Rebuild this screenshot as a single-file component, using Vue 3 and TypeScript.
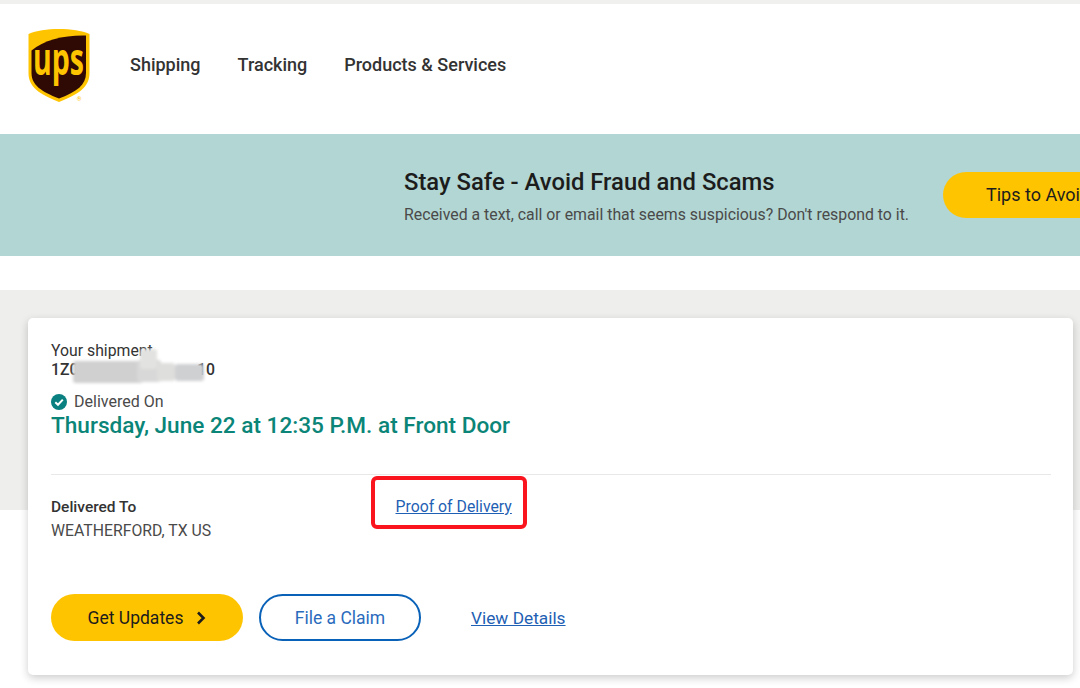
<script setup lang="ts">
const navItems: string[] = ['Shipping', 'Tracking', 'Products & Services']
const smudges = [
  { left: 0, top: 5, width: 70, height: 22, background: '#d0d0d0' },
  { left: 64, top: 4, width: 24, height: 22, background: '#d8d8d8' },
  { left: 67, top: -7, width: 17, height: 20, background: '#e2e2e0' },
  { left: 84, top: 7, width: 18, height: 18, background: '#dededc' },
  { left: 102, top: 8, width: 29, height: 17, background: '#cfd0d2' },
]
</script>

<template>
  <div class="page">
    <header class="header">
      <svg class="logo" width="62" height="76" viewBox="0 0 62 76" aria-label="UPS">
        <path d="M31 0C19 0 8 1.500 0.500 5V44C0.500 58 11 65 31 73C51 65 61.500 58 61.500 44V5C54 1.500 43 0 31 0Z" fill="#ffc400" />
        <path d="M58 6.500V44C58 56 49 62.500 31 69.500C13 62.500 3.500 56 3.500 44V21.500C16 11 36 6 58 6.500Z" fill="#2f0a05" />
        <text class="logo-text" x="30.500" y="46" text-anchor="middle" textLength="51" lengthAdjust="spacingAndGlyphs">ups</text>
        <text class="logo-mark" x="51" y="72" text-anchor="middle">®</text>
      </svg>
      <nav class="nav">
        <a v-for="item in navItems" :key="item" class="nav-item">{{ item }}</a>
      </nav>
    </header>

    <section class="banner">
      <div class="banner-copy">
        <h2 class="banner-title">Stay Safe - Avoid Fraud and Scams</h2>
        <p class="banner-text">Received a text, call or email that seems suspicious? Don't respond to it.</p>
      </div>
      <div class="banner-button">Tips to Avoid</div>
    </section>

    <main class="tracking">
      <article class="card">
        <div class="shipment">
          <div class="shipment-label">Your shipment</div>
          <div class="shipment-number">
            <span>1Z0</span>
            <span>10</span>
          </div>
          <div class="redaction">
            <span
              v-for="(patch, index) in smudges"
              :key="index"
              class="smudge"
              :style="{
                left: patch.left + 'px',
                top: patch.top + 'px',
                width: patch.width + 'px',
                height: patch.height + 'px',
                background: patch.background,
              }"
            ></span>
          </div>
        </div>

        <div class="status">
          <svg width="16" height="16" viewBox="0 0 16 16" aria-hidden="true">
            <circle cx="8" cy="8" r="8" fill="#0a8080" />
            <path d="M4.300 8.200L7 10.800L11.800 5.600" fill="none" stroke="#fff" stroke-width="2" />
          </svg>
          <span>Delivered On</span>
        </div>
        <div class="date">Thursday, June 22 at 12:35 P.M. at Front Door</div>

        <div class="details">
          <div class="destination">
            <div class="destination-label">Delivered To</div>
            <div class="destination-value">WEATHERFORD, TX US</div>
          </div>
          <div class="proof">
            <a class="link">Proof of Delivery</a>
          </div>
        </div>

        <div class="actions">
          <button class="btn btn-primary" type="button">
            Get Updates
            <svg width="10" height="14" viewBox="0 0 10 14" aria-hidden="true">
              <path d="M2 1.500L7.500 7L2 12.500" fill="none" stroke="#1c1c1c" stroke-width="2.600" />
            </svg>
          </button>
          <button class="btn btn-outline" type="button">File a Claim</button>
          <a class="link link-large">View Details</a>
        </div>
      </article>
    </main>
  </div>
</template>

<style>
html,
body {
  margin: 0;
  background: #fff;
  overflow: hidden;
}
</style>

<style scoped>
.page {
  width: 1080px;
  height: 688px;
  overflow: hidden;
  background: #fff;
  font-family: Roboto, "Liberation Sans", sans-serif;
  color: #333;
  border-top: 4px solid #f0f0ee;
  box-sizing: border-box;
}

.header {
  height: 130px;
  padding: 25px 0 0 28px;
  box-sizing: border-box;
  display: flex;
  align-items: flex-start;
}

.logo {
  display: block;
  flex: none;
}

.logo-text {
  font-family: "Open Sans", Roboto, sans-serif;
  font-weight: 700;
  font-size: 45px;
  fill: #ffc400;
}

.logo-mark {
  font-family: Roboto, sans-serif;
  font-size: 6px;
  fill: #ffc400;
}

.nav {
  display: flex;
  gap: 37px;
  margin: 25px 0 0 40px;
}

.nav-item {
  font-size: 18px;
  font-weight: 500;
  line-height: 22px;
  color: #333;
}

.banner {
  height: 122px;
  background: #b2d6d3;
  display: flex;
  padding-left: 404px;
  box-sizing: border-box;
  white-space: nowrap;
  overflow: hidden;
}

.banner-copy {
  width: 539px;
  flex: none;
  padding-top: 33px;
}

.banner-title {
  margin: 0;
  font-size: 23.800px;
  line-height: 30px;
  font-weight: 500;
  color: #1c1c1c;
}

.banner-text {
  margin: 8px 0 0;
  font-size: 15.850px;
  line-height: 20px;
  color: #4a4a4a;
}

.banner-button {
  flex: none;
  width: 240px;
  height: 46px;
  margin-top: 38px;
  padding-left: 43px;
  box-sizing: border-box;
  background: #ffc400;
  border-radius: 23px;
  font-size: 18px;
  line-height: 46px;
  color: #1c1c1c;
}

.tracking {
  margin-top: 34px;
  height: 220px;
  box-sizing: border-box;
  background: #eeeeec;
  padding: 28px 7px 0 28px;
}

.card {
  height: 357px;
  box-sizing: border-box;
  background: #fff;
  border-radius: 5px;
  box-shadow: 0 3px 8px rgba(0, 0, 0, 0.2);
  padding: 24px 22px 0 23px;
}

.shipment {
  position: relative;
  font-size: 15.800px;
  line-height: 18px;
  color: #333;
}

.shipment-number {
  margin-top: 1px;
  width: 164px;
  display: flex;
  justify-content: space-between;
  font-weight: 500;
}

.redaction {
  position: absolute;
  left: 22px;
  top: 14px;
  width: 131px;
  height: 28px;
  filter: blur(1.500px);
}

.smudge {
  position: absolute;
  border-radius: 3px;
}

.status {
  margin-top: 14px;
  display: flex;
  align-items: center;
  gap: 7px;
  font-size: 16px;
  line-height: 18px;
  color: #4a4a4a;
}

.date {
  font-size: 22.600px;
  line-height: 30px;
  font-weight: 500;
  color: #0a8577;
}

.details {
  margin-top: 33px;
  border-top: 1px solid #e8e8e6;
  padding-top: 22px;
  display: flex;
  height: 63px;
}

.destination {
  width: 344.500px;
  flex: none;
  font-size: 15.800px;
  line-height: 20px;
}

.destination-label {
  font-size: 15.500px;
  font-weight: 500;
  color: #333;
}

.destination-value {
  margin-top: 4px;
  color: #4a4a4a;
}

.proof {
  position: relative;
  font-size: 15.800px;
  line-height: 20px;
}

.proof::after {
  content: "";
  position: absolute;
  left: -25px;
  top: -21px;
  width: 156px;
  height: 53px;
  border: 4px solid #fa141e;
  border-radius: 6px;
  box-sizing: border-box;
}

.link {
  color: #1f5fb4;
  text-decoration: underline;
  white-space: nowrap;
}

.actions {
  margin-top: 34px;
  display: flex;
  align-items: center;
}

.btn {
  height: 47px;
  border-radius: 24px;
  box-sizing: border-box;
  font-family: inherit;
  font-size: 17.500px;
  padding: 0;
}

.btn-primary {
  width: 192px;
  border: none;
  background: #ffc400;
  color: #1c1c1c;
  display: flex;
  align-items: center;
  justify-content: center;
  gap: 13px;
}

.btn-outline {
  width: 162px;
  margin-left: 16px;
  background: #fff;
  border: 2px solid #0a62b8;
  color: #2a6bbd;
}

.link-large {
  margin-left: 50px;
  font-size: 17.300px;
}
</style>
